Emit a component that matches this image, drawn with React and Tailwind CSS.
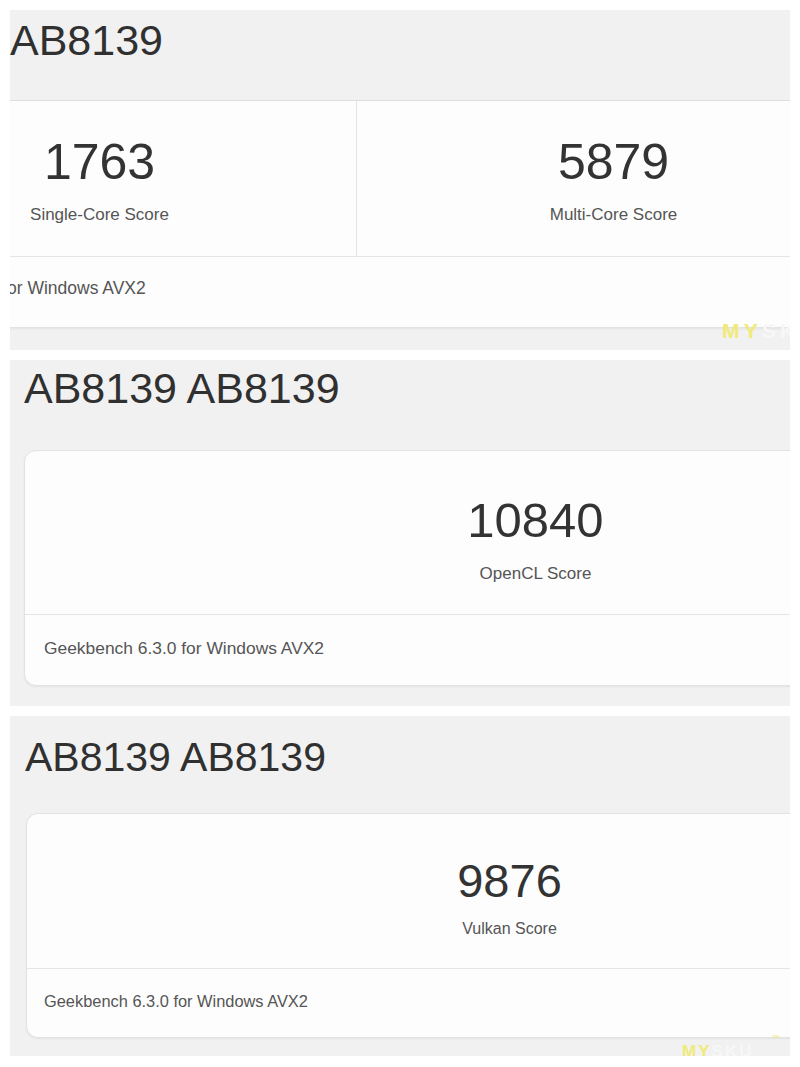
export default function App() {
  return (
    <div className="w-[800px] h-[1067px] bg-white flex flex-col gap-[10px] pt-[10px] px-[10px] overflow-hidden font-['Liberation_Sans',Arial,sans-serif]">
      {/* Panel 1 */}
      <section className="relative h-[340px] shrink-0 overflow-hidden bg-[#f1f1f1] flex flex-col">
        <header className="h-[91px] shrink-0 border-b border-[#dedede] pt-[9px]">
          <h1 className="text-[43px] leading-none text-[#303030]">AB8139</h1>
        </header>
        <div className="ml-[-167px] w-[1027px] shrink-0 bg-[#fdfdfd] border-b border-[#e2e2e2] shadow-[0_1px_2px_rgba(0,0,0,0.06)]">
          <div className="h-[156px] border-b border-[#e4e4e4] grid grid-cols-[514px_513px]">
            <div className="border-r border-[#e4e4e4] flex flex-col items-center pt-[36px]">
              <div className="text-[50px] leading-none text-[#333]">1763</div>
              <div className="mt-[19px] text-[17px] leading-none text-[#555]">Single-Core Score</div>
            </div>
            <div className="flex flex-col items-center pt-[36px]">
              <div className="text-[50px] leading-none text-[#333]">5879</div>
              <div className="mt-[19px] text-[17px] leading-none text-[#555]">Multi-Core Score</div>
            </div>
          </div>
          <div className="h-[70px] flex items-center pl-[21px] pb-[6px]">
            <span className="text-[17.5px] leading-none text-[#555]">Geekbench 6.3.0 for Windows AVX2</span>
          </div>
        </div>
        <div className="absolute left-[712px] top-[310px] text-[21px] font-bold tracking-[0.2em] leading-none whitespace-nowrap">
          <span className="text-[#f0ea78]">MY</span>
          <span className="text-[#f7f7f7]">SKU</span>
        </div>
      </section>

      {/* Panel 2 */}
      <section className="relative h-[346px] shrink-0 overflow-hidden bg-[#f1f1f1] flex flex-col pt-[7px] pb-[21px]">
        <h1 className="pl-[14px] text-[43px] leading-none text-[#303030]">AB8139 AB8139</h1>
        <div className="mt-[40px] ml-[14px] w-[1023px] shrink-0 bg-[#fdfdfd] border border-[#e2e2e2] rounded-[12px] shadow-[0_1px_2px_rgba(0,0,0,0.06)]">
          <div className="h-[164px] border-b border-[#e4e4e4] flex flex-col items-center pt-[45px]">
            <div className="text-[49px] leading-none text-[#333]">10840</div>
            <div className="mt-[20px] text-[17px] leading-none text-[#555]">OpenCL Score</div>
          </div>
          <div className="h-[70px] flex items-center pl-[19px] pb-[3px]">
            <span className="text-[17.4px] leading-none text-[#555]">Geekbench 6.3.0 for Windows AVX2</span>
          </div>
        </div>
      </section>

      {/* Panel 3 */}
      <section className="relative h-[340px] shrink-0 overflow-hidden bg-[#f1f1f1] flex flex-col pt-[21px] pb-[19px]">
        <h1 className="pl-[15px] text-[41px] leading-none text-[#303030]">AB8139 AB8139</h1>
        <div className="mt-[35px] ml-[16px] w-[967px] shrink-0 bg-[#fdfdfd] border border-[#e2e2e2] rounded-[12px] shadow-[0_1px_2px_rgba(0,0,0,0.06)]">
          <div className="h-[155px] border-b border-[#e4e4e4] flex flex-col items-center pt-[43px]">
            <div className="text-[47px] leading-none text-[#333]">9876</div>
            <div className="mt-[17px] text-[16px] leading-none text-[#555]">Vulkan Score</div>
          </div>
          <div className="h-[68px] flex items-center pl-[17px] pb-[3px]">
            <span className="text-[16.4px] leading-none text-[#555]">Geekbench 6.3.0 for Windows AVX2</span>
          </div>
        </div>
        <div className="absolute left-[672px] top-[327px] text-[17px] font-bold tracking-[0.12em] leading-none whitespace-nowrap">
          <span className="text-[#f0ea78]">MY</span>
          <span className="text-[#f7f7f7]">SKU</span>
        </div>
        <div className="absolute left-[762px] top-[319px] text-[8px] font-bold leading-none text-[#f0ea78]">™</div>
      </section>
    </div>
  );
}
